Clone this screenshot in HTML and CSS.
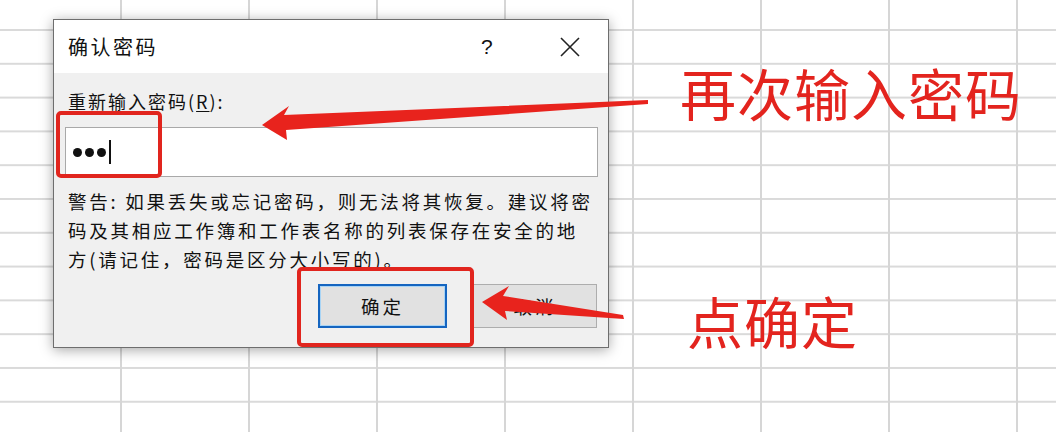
FILE: index.html
```html
<!DOCTYPE html>
<html lang="zh-CN">
<head>
<meta charset="utf-8">
<title>确认密码</title>
<link rel="stylesheet" href="styles.css">
</head>
<body>
<div class="sheet">
  <div class="dialog">
    <div class="titlebar">
      <span class="title">确认密码</span>
      <span class="help">?</span>
      <span class="close">
        <svg width="22" height="22" viewBox="0 0 22 22"><path d="M2 2 L20 20 M20 2 L2 20" stroke="#222" stroke-width="1.6" fill="none"/></svg>
      </span>
    </div>
    <div class="body">
      <div class="label">重新输入密码(<u>R</u>):</div>
      <div class="input">
        <span class="dot"></span><span class="dot"></span><span class="dot"></span><span class="caret"></span>
      </div>
      <div class="warning">
        <div class="line">警告: 如果丢失或忘记密码，则无法将其恢复。建议将密</div>
        <div class="line">码及其相应工作簿和工作表名称的列表保存在安全的地</div>
        <div class="line">方(请记住，密码是区分大小写的)。</div>
      </div>
      <div class="buttons">
        <div class="btn btn-ok">确定</div>
        <div class="btn btn-cancel">取消</div>
      </div>
    </div>
  </div>

  <div class="mark mark-input"></div>
  <div class="mark mark-ok"></div>

  <svg class="arrows" width="1056" height="432" viewBox="0 0 1056 432">
    <polygon fill="#e8231d" points="262,125 289,106 284,115 648,100 648,104 286,130 287,140"/>
    <polygon fill="#e8231d" points="482,302 509,286 503,296 623,315 624,319 505,311 507,320"/>
  </svg>

  <div class="callout callout-1">再次输入密码</div>
  <div class="callout callout-2">点确定</div>
</div>
</body>
</html>
```
FILE: styles.css
```css
html, body {
  margin: 0;
  padding: 0;
  background: #ffffff;
}

.sheet {
  position: relative;
  width: 1056px;
  height: 432px;
  overflow: hidden;
  background-color: #ffffff;
  background-image:
    linear-gradient(to right, #d6d6d6 2px, transparent 2px),
    linear-gradient(to bottom, #dadada 2px, transparent 2px);
  background-size: 128px 33.8px;
  background-position: 120px 29px;
  font-family: "Noto Sans CJK SC", "Noto Sans", sans-serif;
}

.dialog {
  position: absolute;
  left: 53px;
  top: 19px;
  width: 556px;
  height: 329px;
  box-sizing: border-box;
  border: 1px solid #6e6e6e;
  background: #f0f0f0;
  box-shadow: 0 2px 12px rgba(0, 0, 0, 0.35);
  display: flex;
  flex-direction: column;
}

.titlebar {
  height: 53px;
  background: #ffffff;
  display: flex;
  align-items: center;
  padding-left: 14px;
  color: #111;
}

.title {
  font-size: 20px;
  letter-spacing: 2.5px;
  flex: 1;
}

.help {
  font-family: "Liberation Sans", sans-serif;
  font-size: 21px;
  width: 20px;
  margin-right: 58px;
}

.close {
  display: flex;
  width: 22px;
  margin-right: 27px;
}

.body {
  flex: 1;
  padding: 15px 10px 0 11px;
  color: #111;
}

.label {
  font-size: 18px;
  line-height: 26px;
  letter-spacing: 2px;
  margin-left: 3px;
}

.label u {
  text-decoration: underline;
  text-underline-offset: 2px;
}

.input {
  margin-top: 13px;
  height: 50px;
  width: 533px;
  box-sizing: border-box;
  border: 1px solid #a9a9a9;
  background: #ffffff;
  display: flex;
  align-items: center;
  padding-left: 7px;
  gap: 3px;
}

.dot {
  width: 9px;
  height: 9px;
  border-radius: 50%;
  background: #111;
}

.caret {
  width: 2px;
  height: 24px;
  background: #111;
}

.warning {
  margin-top: 10px;
  margin-left: 3px;
  font-size: 18.5px;
  line-height: 29px;
  letter-spacing: 2.75px;
  white-space: nowrap;
}

.buttons {
  display: flex;
  justify-content: flex-end;
  gap: 26px;
  margin-top: 10px;
  padding-right: 1px;
}

.btn {
  height: 44px;
  box-sizing: border-box;
  background: #e1e1e1;
  display: flex;
  align-items: center;
  justify-content: center;
  font-size: 18.5px;
  letter-spacing: 3px;
  color: #111;
}

.btn-ok {
  width: 129px;
  border: 2px solid #1565c0;
  box-shadow: inset 0 0 0 1px #a8d4f5;
}

.btn-cancel {
  width: 124px;
  border: 1px solid #adadad;
}

.mark {
  position: absolute;
  border: 4px solid #e1251e;
  border-radius: 5px;
  box-sizing: border-box;
}

.mark-input {
  left: 56px;
  top: 111px;
  width: 106px;
  height: 67px;
}

.mark-ok {
  left: 297px;
  top: 267px;
  width: 177px;
  height: 80px;
}

.arrows {
  position: absolute;
  left: 0;
  top: 0;
}

.callout {
  position: absolute;
  color: #e3241e;
  font-size: 56px;
  line-height: 56px;
  letter-spacing: 1px;
  white-space: nowrap;
}

.callout-1 {
  left: 680px;
  top: 64px;
}

.callout-2 {
  left: 687px;
  top: 292px;
}
```
